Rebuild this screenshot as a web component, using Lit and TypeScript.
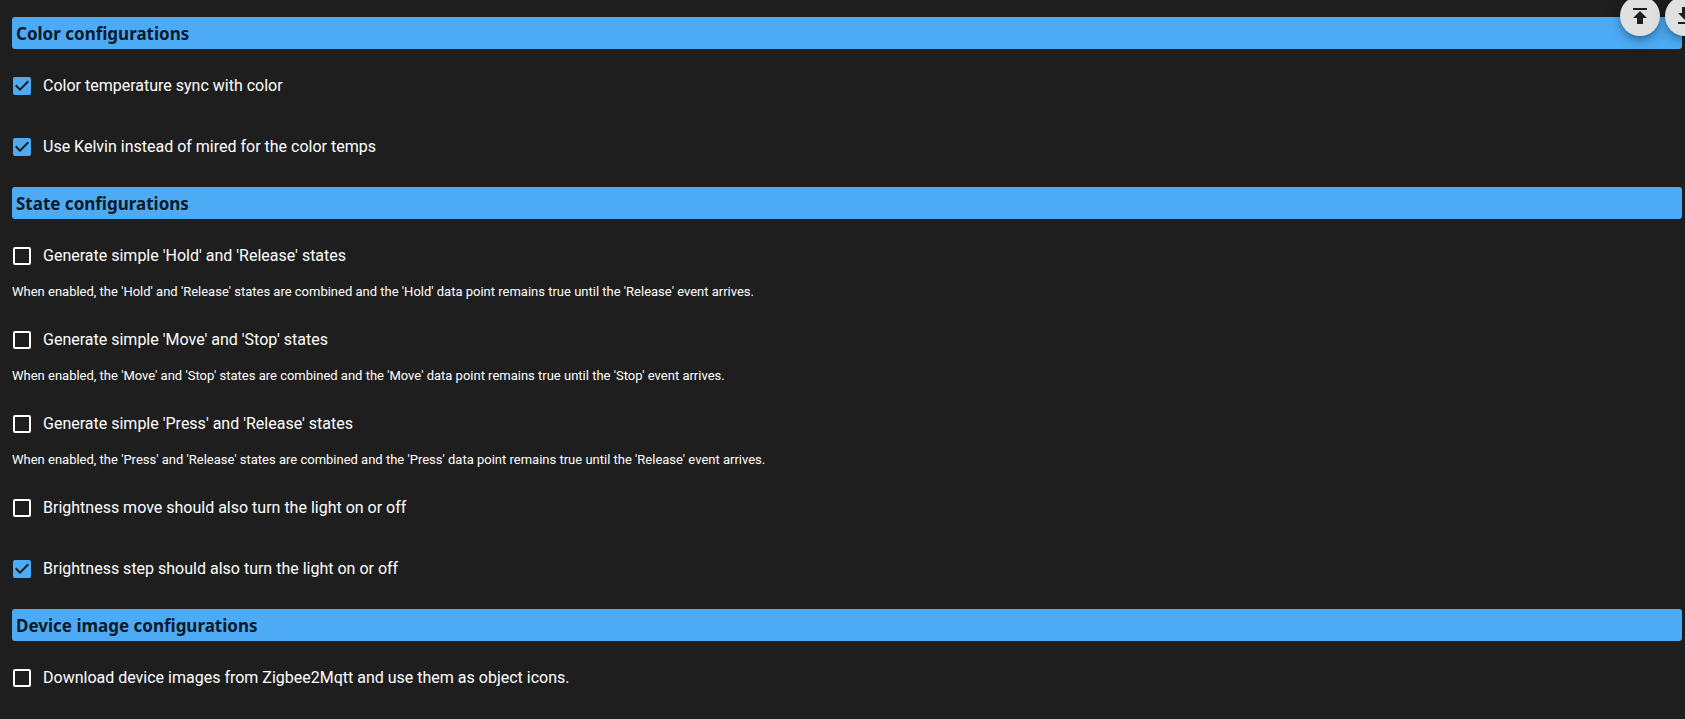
import { LitElement, html, css, svg, nothing } from "lit";
import { customElement, property } from "lit/decorators.js";

interface Option {
  id: string;
  label: string;
  checked: boolean;
  help?: string;
}

interface Section {
  title: string;
  options: Option[];
}

const SECTIONS: Section[] = [
  {
    title: "Color configurations",
    options: [
      { id: "colorTempSync", label: "Color temperature sync with color", checked: true },
      { id: "useKelvin", label: "Use Kelvin instead of mired for the color temps", checked: true },
    ],
  },
  {
    title: "State configurations",
    options: [
      {
        id: "simpleHoldRelease",
        label: "Generate simple 'Hold' and 'Release' states",
        checked: false,
        help: "When enabled, the 'Hold' and 'Release' states are combined and the 'Hold' data point remains true until the 'Release' event arrives.",
      },
      {
        id: "simpleMoveStop",
        label: "Generate simple 'Move' and 'Stop' states",
        checked: false,
        help: "When enabled, the 'Move' and 'Stop' states are combined and the 'Move' data point remains true until the 'Stop' event arrives.",
      },
      {
        id: "simplePressRelease",
        label: "Generate simple 'Press' and 'Release' states",
        checked: false,
        help: "When enabled, the 'Press' and 'Release' states are combined and the 'Press' data point remains true until the 'Release' event arrives.",
      },
      { id: "brightnessMove", label: "Brightness move should also turn the light on or off", checked: false },
      { id: "brightnessStep", label: "Brightness step should also turn the light on or off", checked: true },
    ],
  },
  {
    title: "Device image configurations",
    options: [
      {
        id: "downloadImages",
        label: "Download device images from Zigbee2Mqtt and use them as object icons.",
        checked: false,
      },
    ],
  },
];

@customElement("config-option")
class ConfigOption extends LitElement {
  @property({ attribute: false }) option!: Option;

  static styles = css`
    :host {
      display: block;
      padding-bottom: 19px;
    }
    .row {
      display: flex;
      align-items: center;
      width: fit-content;
      height: 42px;
      gap: 11px;
      font-size: 16px;
      line-height: 24px;
      cursor: pointer;
    }
    .box {
      display: grid;
      flex: none;
      width: 20px;
      height: 24px;
      place-items: center;
    }
    .input,
    .mark {
      grid-area: 1 / 1;
    }
    .input {
      appearance: none;
      box-sizing: border-box;
      width: 18px;
      height: 18px;
      margin: 0;
      border: 2px solid #fff;
      border-radius: 2px;
      cursor: pointer;
    }
    .input:checked {
      border-color: #4dabf5;
      background: #4dabf5;
    }
    .mark {
      display: none;
      width: 18px;
      height: 18px;
      fill: #1e1e1e;
      pointer-events: none;
    }
    .input:checked + .mark {
      display: block;
    }
    .help {
      margin: 7px 0 0;
      font-size: 13px;
      line-height: 16px;
    }
  `;

  render() {
    const { id, label, checked, help } = this.option;
    return html`
      <label class="row" for=${id}>
        <span class="box">
          <input
            class="input"
            type="checkbox"
            id=${id}
            .checked=${checked}
            aria-describedby=${help ? `${id}-help` : nothing}
          />
          <svg class="mark" viewBox="3 3 18 18" aria-hidden="true">
            <path d="M10 17l-5-5 1.41-1.41L10 14.17l7.59-7.59L19 8l-9 9z" />
          </svg>
        </span>
        <span>${label}</span>
      </label>
      ${help ? html`<p class="help" id="${id}-help">${help}</p>` : nothing}
    `;
  }
}

@customElement("app-root")
class AppRoot extends LitElement {
  static styles = css`
    :host {
      display: block;
      box-sizing: border-box;
      position: relative;
      min-height: 100vh;
      padding: 17px 3px 0 12px;
      overflow: hidden;
      background: #1e1e1e;
      color: #fff;
      font-family: Roboto, "Liberation Sans", sans-serif;
    }
    .title {
      margin: 0 0 16px;
      padding: 2px 4px 0;
      border-radius: 3px;
      background: #4dabf5;
      color: #0b1a26;
      font-family: "Noto Sans", "Open Sans", sans-serif;
      font-size: 17px;
      font-weight: 700;
      line-height: 30px;
    }
    .actions {
      position: absolute;
      top: -4px;
      right: -20px;
      display: flex;
      gap: 5px;
    }
    .fab {
      display: grid;
      place-items: center;
      width: 40px;
      height: 40px;
      padding: 0;
      border: 0;
      border-radius: 50%;
      background: #e0e0e0;
      color: #1e1e1e;
      box-shadow:
        0 3px 5px -1px rgba(0, 0, 0, 0.2),
        0 6px 10px 0 rgba(0, 0, 0, 0.14),
        0 1px 18px 0 rgba(0, 0, 0, 0.12);
      cursor: pointer;
    }
    .icon {
      width: 24px;
      height: 24px;
      fill: currentColor;
    }
  `;

  private fab(label: string, d: string) {
    return html`
      <button class="fab" type="button" aria-label=${label}>
        <svg class="icon" viewBox="0 0 24 24" aria-hidden="true">${svg`<path d=${d} />`}</svg>
      </button>
    `;
  }

  render() {
    return html`
      <main>
        ${SECTIONS.map(
          (section) => html`
            <section>
              <h2 class="title">${section.title}</h2>
              ${section.options.map((option) => html`<config-option .option=${option}></config-option>`)}
            </section>
          `,
        )}
      </main>
      <div class="actions">
        ${this.fab("Upload configuration", "M5 4v2h14V4H5zm0 10h4v6h6v-6h4l-7-7-7 7z")}
        ${this.fab("Download configuration", "M19 9h-4V3H9v6H5l7 7 7-7zM5 18v2h14v-2H5z")}
      </div>
    `;
  }
}
